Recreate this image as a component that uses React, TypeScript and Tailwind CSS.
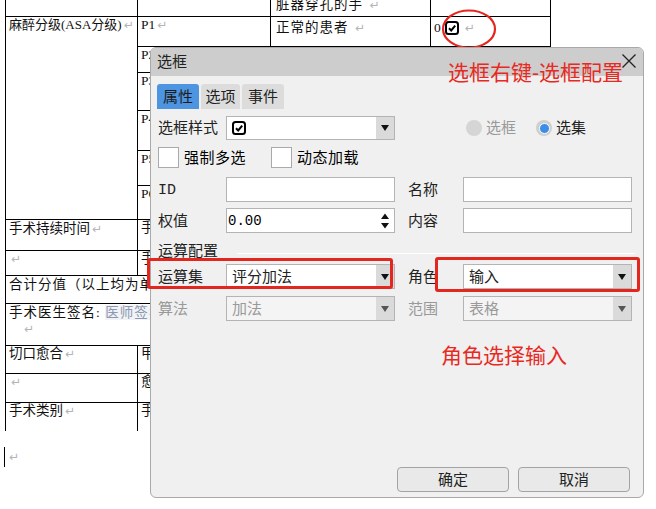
import React from 'react';

const doc = "font-['Liberation_Serif','Noto_Sans_CJK_SC',serif]";
const ui = "font-['Liberation_Sans','Noto_Sans_CJK_SC',sans-serif]";
const mono = "font-['Liberation_Mono','Noto_Sans_CJK_SC',monospace]";

function Ret() {
  return <span className="text-[#b4b4b4] text-[12px] ml-[2px] font-['DejaVu_Sans',sans-serif]">↵</span>;
}

function CheckGlyph() {
  return (
    <svg width="14" height="14" viewBox="0 0 14 14" className="inline-block">
      <rect x="1" y="1" width="12" height="12" rx="2.5" fill="white" stroke="black" strokeWidth="2" />
      <path d="M4 7.2 L6.2 9.4 L10.2 4.6" fill="none" stroke="black" strokeWidth="2" />
    </svg>
  );
}

function Arrow({ dim }: { dim?: boolean }) {
  return (
    <div className="w-[18px] h-full bg-[#dadada] flex items-center justify-center">
      <svg width="10" height="8" viewBox="0 0 10 8">
        <path d="M1 1 L9 1 L5 7 Z" fill={dim ? '#555' : '#111'} />
      </svg>
    </div>
  );
}

function Select({ children, dim }: { children?: React.ReactNode; dim?: boolean }) {
  return (
    <div className={`w-[169px] h-full border border-[#b4b4b4] flex items-stretch ${dim ? 'bg-[#f4f4f4] text-[#999]' : 'bg-white text-[#222]'}`}>
      <div className="flex-1 flex items-center pl-[5px]">{children}</div>
      <Arrow dim={dim} />
    </div>
  );
}

function Input({ children }: { children?: React.ReactNode }) {
  return <div className="w-[169px] h-full border border-[#b4b4b4] bg-white flex items-center pl-[5px]">{children}</div>;
}

function Label({ children, dim, w = 'w-[69px]' }: { children: React.ReactNode; dim?: boolean; w?: string }) {
  return <div className={`${w} pl-[1px] ${dim ? 'text-[#999]' : 'text-[#222]'}`}>{children}</div>;
}

const td = 'border border-black align-top px-[3px] text-[13.5px] leading-[16px] text-[#111] whitespace-nowrap overflow-hidden';

export default function App() {
  return (
    <div className={`relative w-[656px] h-[509px] overflow-hidden bg-white ${doc}`}>
      {/* document table behind the dialog */}
      <table className="ml-[5px] -mt-[14px] border-collapse table-fixed w-[545px]">
        <colgroup>
          <col className="w-[132px]" />
          <col className="w-[133px]" />
          <col className="w-[160px]" />
          <col className="w-[120px]" />
        </colgroup>
        <tbody>
          <tr className="h-[30px]">
            <td className={td} />
            <td className={td} />
            <td className={`${td} pt-[10px] pl-[5px] tracking-[1px]`}>脏器穿孔的手 <Ret /></td>
            <td className={td} />
          </tr>
          <tr className="h-[30px]">
            <td className={`${td} pt-[0px] text-[13px]`} rowSpan={6}>麻醉分级(ASA分级)<Ret /></td>
            <td className={`${td} pt-[0px]`}>P1<Ret /></td>
            <td className={`${td} pt-[3px] pl-[5px] tracking-[1px]`}>正常的患者 <Ret /></td>
            <td className={`${td} pt-[3px]`}>
              <span className="inline-flex items-center gap-[4px]">0<CheckGlyph /><Ret /></span>
            </td>
          </tr>
          <tr className="h-[26px]"><td className={td}>P2<Ret /></td><td className={td} /><td className={td} /></tr>
          <tr className="h-[38px]"><td className={td}>P3<Ret /></td><td className={td} /><td className={td} /></tr>
          <tr className="h-[40px]"><td className={td}>P4<Ret /></td><td className={td} /><td className={td} /></tr>
          <tr className="h-[35px]"><td className={td}>P5<Ret /></td><td className={td} /><td className={td} /></tr>
          <tr className="h-[34px]"><td className={td}>P6<Ret /></td><td className={td} /><td className={td} /></tr>
          <tr className="h-[31px]">
            <td className={`${td} pt-[1px]`}>手术持续时间<Ret /></td>
            <td className={td}>手术时间<Ret /></td>
            <td className={td} /><td className={td} />
          </tr>
          <tr className="h-[25px]">
            <td className={td}><Ret /></td>
            <td className={td}>手术时间<Ret /></td>
            <td className={td} /><td className={td} />
          </tr>
          <tr className="h-[28px]">
            <td className={`${td} pt-[1px] tracking-[1px]`} colSpan={4}>合计分值（以上均为单项分值之和）<Ret /></td>
          </tr>
          <tr className="h-[42px]">
            <td className={`${td} pt-[1px] tracking-[1px]`} colSpan={4}>
              手术医生签名: <span className="text-[#8b98ae] bg-[#f1f3f7]">医师签名</span>
              <div className="pl-[13px]"><Ret /></div>
            </td>
          </tr>
          <tr className="h-[28px]">
            <td className={td}>切口愈合<Ret /></td>
            <td className={td}>甲级愈合<Ret /></td>
            <td className={td} /><td className={td} />
          </tr>
          <tr className="h-[29px]">
            <td className={td}><Ret /></td>
            <td className={td}>愈合不良<Ret /></td>
            <td className={td} /><td className={td} />
          </tr>
          <tr className="h-[28px]">
            <td className={`${td} border-b-0`}>手术类别<Ret /></td>
            <td className={`${td} border-b-0`}>手术类别<Ret /></td>
            <td className={`${td} border-b-0`} /><td className={`${td} border-b-0`} />
          </tr>
        </tbody>
      </table>

      <div className="mt-[16px] ml-[4px] h-[20px] flex items-center border-l border-black pl-[2px]">
        <Ret />
      </div>

      {/* red circle marking the checkbox */}
      <svg className="absolute left-[440px] top-[8px]" width="58" height="42" viewBox="0 0 58 42">
        <ellipse cx="29" cy="21" rx="26" ry="18.5" fill="none" stroke="#e3261e" strokeWidth="2.2" />
      </svg>

      {/* dialog */}
      <div className={`absolute left-[150px] top-[47px] w-[494px] h-[451px] rounded-[6px] border border-[#a9a9a9] bg-[#f0f0f0] flex flex-col ${ui} text-[15px] leading-[20px]`}>
        <div className="h-[28px] bg-[#cdcdcd] rounded-t-[5px] flex items-center justify-between pl-[6px] pr-[6px]">
          <span className="text-[#222]">选框</span>
          <svg width="16" height="16" viewBox="0 0 16 16" className="mt-[-2px]">
            <path d="M1.5 1.5 L14.5 14.5 M14.5 1.5 L1.5 14.5" stroke="#222" strokeWidth="1.3" />
          </svg>
        </div>

        <div className="flex-1 flex flex-col pl-[6px] pr-[9px]">
          {/* tabs */}
          <div className="mt-[8px] h-[25px] flex gap-[2px]">
            <div className="w-[42px] bg-[#4d95e0] rounded-t-[3px] flex items-center justify-center text-[#1c1c1c]">属性</div>
            <div className="w-[39px] bg-[#dcdcdc] rounded-t-[3px] flex items-center justify-center text-[#222]">选项</div>
            <div className="w-[42px] bg-[#dcdcdc] rounded-t-[3px] flex items-center justify-center text-[#222]">事件</div>
          </div>

          <div className="mt-[7px] h-[24px] flex items-center">
            <Label>选框样式</Label>
            <Select><CheckGlyph /></Select>
            <div className="ml-[71px] flex items-center gap-[4px] text-[#999]">
              <div className="w-[16px] h-[16px] rounded-full bg-[#d5d5d5]" />
              选框
            </div>
            <div className="ml-[20px] flex items-center gap-[4px] text-[#222]">
              <div className="w-[16px] h-[16px] rounded-full bg-[#cfcfcf] flex items-center justify-center">
                <div className="w-[11px] h-[11px] rounded-full bg-[#3b8de8] border border-white" />
              </div>
              选集
            </div>
          </div>

          <div className="mt-[7px] h-[21px] flex items-center">
            <div className="w-[21px] h-[21px] bg-white border border-[#aaa] ml-[1px]" />
            <span className="ml-[5px] w-[87px] tracking-[0.5px]">强制多选</span>
            <div className="w-[21px] h-[21px] bg-white border border-[#aaa]" />
            <span className="ml-[5px] tracking-[0.5px]">动态加载</span>
          </div>

          <div className="mt-[9px] h-[25px] flex items-center">
            <Label><span className={`${mono} text-[15px]`}>ID</span></Label>
            <Input />
            <Label w="w-[56px] ml-[12px]">名称</Label>
            <Input />
          </div>

          <div className="mt-[6px] h-[25px] flex items-center">
            <Label>权值</Label>
            <div className="w-[169px] h-full border border-[#b4b4b4] bg-white flex items-center pl-[1px]">
              <span className={`${mono} text-[14px] flex-1`}>0.00</span>
              <svg width="12" height="20" viewBox="0 0 12 20" className="mr-[3px]">
                <path d="M2 8 L10 8 L6 2.5 Z M2 12 L10 12 L6 17.5 Z" fill="#111" />
              </svg>
            </div>
            <Label w="w-[56px] ml-[12px]">内容</Label>
            <Input />
          </div>

          <div className="mt-[11px] h-[14px] flex items-center">
            <span className="pl-[1px] text-[#222] leading-[14px]">运算配置</span>
            <div className="flex-1 ml-[19px] mr-[-1px] mt-[4px] h-[1px] bg-[#a0a0a0] border-b border-white" />
          </div>

          <div className="mt-[6px] h-[25px] flex items-center">
            <Label>运算集</Label>
            <Select>评分加法</Select>
            <Label w="w-[56px] ml-[12px]">角色</Label>
            <Select>输入</Select>
          </div>

          <div className="mt-[7px] h-[25px] flex items-center">
            <Label dim>算法</Label>
            <Select dim>加法</Select>
            <Label dim w="w-[56px] ml-[12px]">范围</Label>
            <Select dim>表格</Select>
          </div>

          <div className="flex-1" />

          <div className="h-[25px] mb-[5px] flex justify-end gap-[9px] pr-[4px]">
            <button className="w-[112px] h-full rounded-[4px] border border-[#a3a3a3] bg-[#e9e9e9] text-[#222]">确定</button>
            <button className="w-[112px] h-full rounded-[4px] border border-[#a3a3a3] bg-[#e9e9e9] text-[#222]">取消</button>
          </div>
        </div>

        {/* annotations laid over the dialog */}
        <div className="absolute left-[297px] top-[13px] text-[21px] leading-[24px] text-[#e8291f]">选框右键-选框配置</div>
        <div className="absolute left-[-4px] top-[210px] w-[246px] h-[31px] border-[3px] border-[#e3261e] rounded-[3px]" />
        <div className="absolute left-[284px] top-[209px] w-[205px] h-[35px] border-[3px] border-[#e3261e] rounded-[3px]" />
        <div className="absolute left-[290px] top-[296px] text-[21px] leading-[24px] text-[#e8291f]">角色选择输入</div>
      </div>
    </div>
  );
}
